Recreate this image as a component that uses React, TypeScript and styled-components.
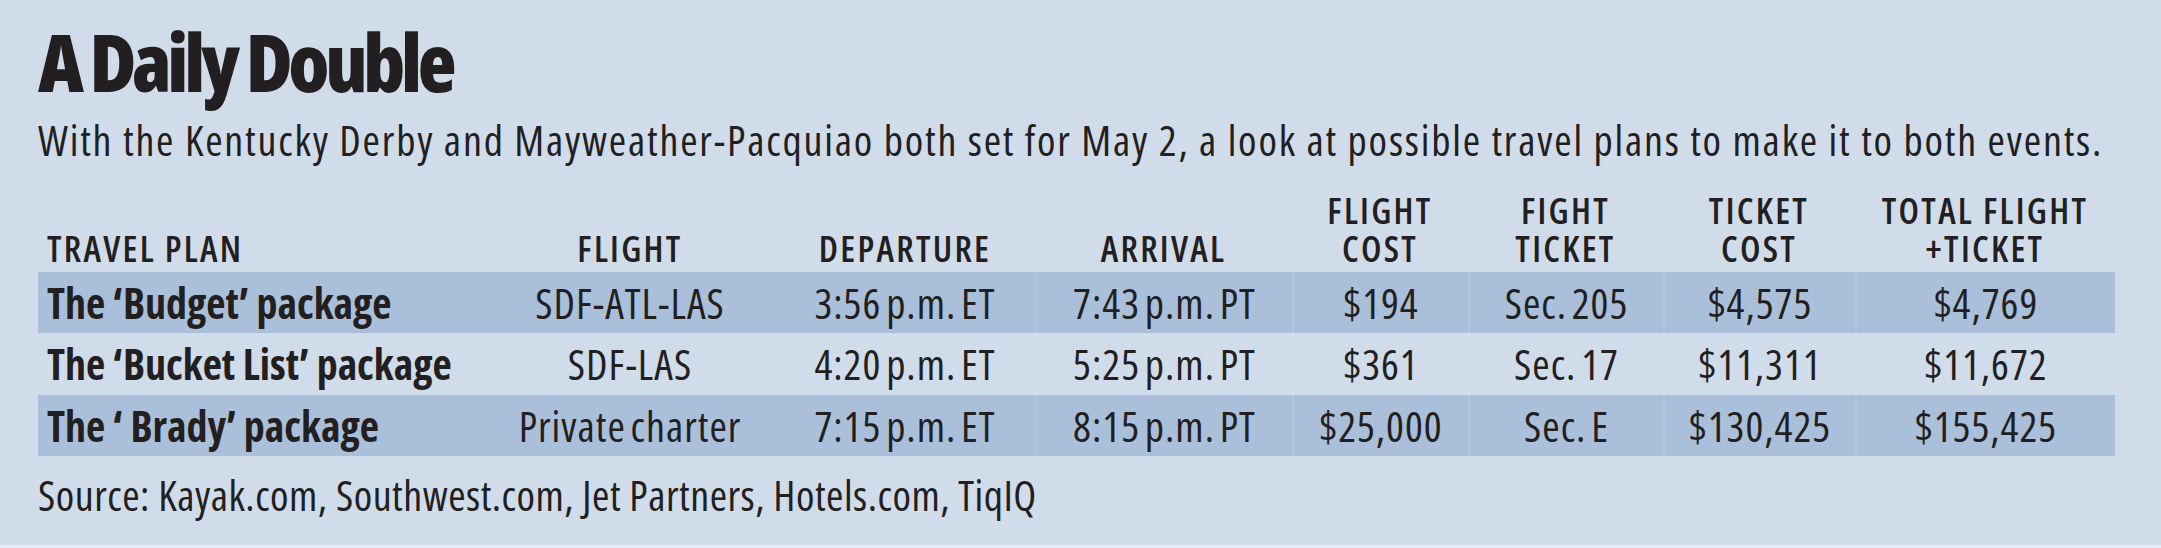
import React from "react";
import styled, { createGlobalStyle } from "styled-components";

const GlobalStyle = createGlobalStyle`
  html, body {
    margin: 0;
    padding: 0;
    background: #e4ebf3;
  }
  * { box-sizing: border-box; }
`;

type Plan = {
  name: string;
  flight: string;
  departure: string;
  arrival: string;
  flightCost: string;
  fightTicket: string;
  ticketCost: string;
  total: string;
};

const plans: Plan[] = [
  {
    name: "The \u2018Budget\u2019 package",
    flight: "SDF-ATL-LAS",
    departure: "3:56 p.m. ET",
    arrival: "7:43 p.m. PT",
    flightCost: "$194",
    fightTicket: "Sec. 205",
    ticketCost: "$4,575",
    total: "$4,769",
  },
  {
    name: "The \u2018Bucket List\u2019 package",
    flight: "SDF-LAS",
    departure: "4:20 p.m. ET",
    arrival: "5:25 p.m. PT",
    flightCost: "$361",
    fightTicket: "Sec. 17",
    ticketCost: "$11,311",
    total: "$11,672",
  },
  {
    name: "The \u2018 Brady\u2019 package",
    flight: "Private charter",
    departure: "7:15 p.m. ET",
    arrival: "8:15 p.m. PT",
    flightCost: "$25,000",
    fightTicket: "Sec. E",
    ticketCost: "$130,425",
    total: "$155,425",
  },
];

const headers: string[][] = [
  ["TRAVEL PLAN"],
  ["FLIGHT"],
  ["DEPARTURE"],
  ["ARRIVAL"],
  ["FLIGHT", "COST"],
  ["FIGHT", "TICKET"],
  ["TICKET", "COST"],
  ["TOTAL FLIGHT", "+TICKET"],
];

const App: React.FC = () => {
  return (
    <>
      <GlobalStyle />
      <Graphic>
        <Title>A Daily Double</Title>
        <Deck>
          With the Kentucky Derby and Mayweather-Pacquiao both set for May 2, a
          look at possible travel plans to make it to both events.
        </Deck>
        <Table>
          <HeaderRow>
            {headers.map((lines, i) => (
              <HeadCell key={i} $first={i === 0}>
                {lines.map((l) => (
                  <div key={l}>{l}</div>
                ))}
              </HeadCell>
            ))}
          </HeaderRow>
          {plans.map((p, i) => (
            <Row key={p.name} $shaded={i % 2 === 0}>
              <NameCell>{p.name}</NameCell>
              <Cell>{p.flight}</Cell>
              <Cell>{p.departure}</Cell>
              <Cell $divided>{p.arrival}</Cell>
              <Cell $divided>{p.flightCost}</Cell>
              <Cell $divided>{p.fightTicket}</Cell>
              <Cell $divided>{p.ticketCost}</Cell>
              <Cell $divided>{p.total}</Cell>
            </Row>
          ))}
        </Table>
        <Source>
          Source: Kayak.com, Southwest.com, Jet Partners, Hotels.com, TiqIQ
        </Source>
      </Graphic>
    </>
  );
};

export default App;

const columns = "447px 290px 260px 257px 176px 195px 192px 260px";

const Graphic = styled.div`
  width: 2161px;
  height: 545px;
  background: #d0dcea;
  padding: 21px 0 0 38px;
  color: #231f20;
  font-family: "Open Sans", "Noto Sans", sans-serif;
  font-stretch: 75%;
  overflow: hidden;
`;

const Title = styled.h1`
  margin: 0;
  font-size: 80px;
  line-height: 80px;
  font-weight: 800;
  letter-spacing: -4.3px;
`;

const Deck = styled.p`
  margin: 18px 0 0;
  font-size: 42px;
  line-height: 42px;
  letter-spacing: 1.8px;
  white-space: nowrap;
`;

const Table = styled.div`
  margin-top: 31px;
  width: 2077px;
`;

const HeaderRow = styled.div`
  display: grid;
  grid-template-columns: ${columns};
  align-items: end;
  padding-bottom: 4px;
`;

const HeadCell = styled.div<{ $first?: boolean }>`
  font-size: 36px;
  line-height: 38px;
  font-weight: 600;
  letter-spacing: 2.3px;
  text-align: ${(p) => (p.$first ? "left" : "center")};
  padding-left: ${(p) => (p.$first ? "9px" : "0")};
  white-space: nowrap;
`;

const Row = styled.div<{ $shaded: boolean }>`
  display: grid;
  grid-template-columns: ${columns};
  height: 61.3px;
  background: ${(p) => (p.$shaded ? "#aac0da" : "transparent")};
`;

const Cell = styled.div<{ $divided?: boolean }>`
  font-size: 42px;
  line-height: 61px;
  letter-spacing: 1px;
  word-spacing: -4px;
  text-align: center;
  white-space: nowrap;
  border-left: ${(p) => (p.$divided ? "2px solid rgba(255, 255, 255, 0.09)" : "none")};
`;

const NameCell = styled.div`
  font-size: 42px;
  line-height: 61px;
  font-weight: 700;
  padding-left: 9px;
  white-space: nowrap;
`;

const Source = styled.p`
  margin: 18px 0 0;
  font-size: 42px;
  line-height: 42px;
  letter-spacing: 0.5px;
  white-space: nowrap;
`;
